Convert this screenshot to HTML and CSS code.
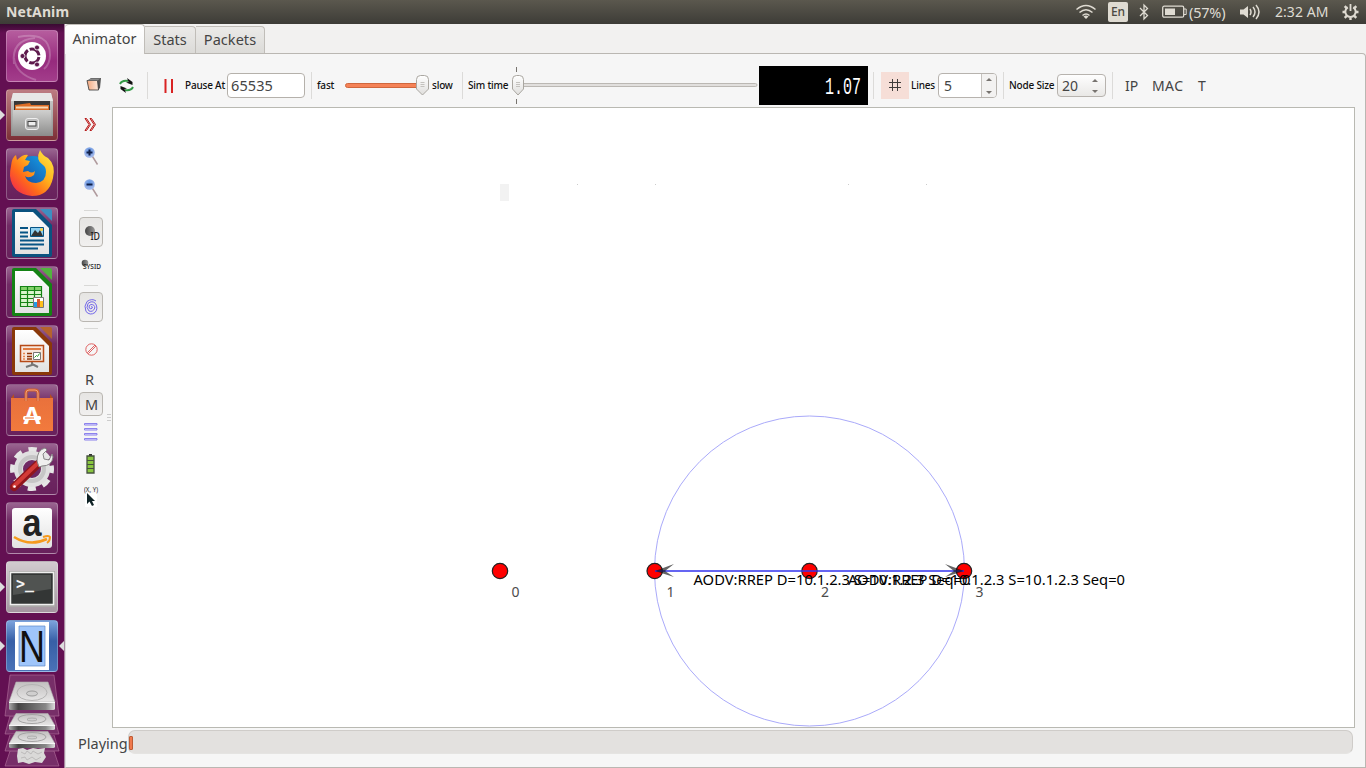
FILE: index.html
```html
<!DOCTYPE html>
<html lang="en">
<head>
<meta charset="utf-8">
<title>NetAnim</title>
<link rel="stylesheet" href="styles.css">
</head>
<body>
<svg class="defs" width="0" height="0">
  <defs>
    <linearGradient id="paper" x1="0" y1="0" x2="0" y2="1"><stop offset="0" stop-color="#fff"/><stop offset="1" stop-color="#e2e2e2"/></linearGradient>
    <linearGradient id="metal" x1="0" y1="0" x2="0" y2="1"><stop offset="0" stop-color="#d0d0cf"/><stop offset="1" stop-color="#8c8c8b"/></linearGradient>
    <linearGradient id="disk" x1="0" y1="0" x2="0" y2="1"><stop offset="0" stop-color="#c2c0c0"/><stop offset="1" stop-color="#e8e7e7"/></linearGradient>
    <linearGradient id="edge"><stop offset="0" stop-color="#aaa"/><stop offset=".2" stop-color="#444"/><stop offset=".8" stop-color="#888"/><stop offset="1" stop-color="#ddd"/></linearGradient>
    <linearGradient id="fire" x1="1" y1="0" x2="0" y2="1"><stop offset="0" stop-color="#fff04a"/><stop offset=".4" stop-color="#ffb01c"/><stop offset=".65" stop-color="#ff6a1a"/><stop offset="1" stop-color="#ee155b"/></linearGradient>
    <linearGradient id="globe" x1="0" y1="1" x2="1" y2="0"><stop offset="0" stop-color="#15398f"/><stop offset="1" stop-color="#16a6ee"/></linearGradient>
    <linearGradient id="bag" x1="0" y1="0" x2="0" y2="1"><stop offset="0" stop-color="#e9713c"/><stop offset="1" stop-color="#f27a3d"/></linearGradient>
    <linearGradient id="thumb" x1="0" y1="0" x2="0" y2="1"><stop offset="0" stop-color="#fff"/><stop offset="1" stop-color="#dfdedc"/></linearGradient>
    <radialGradient id="lens" cx=".5" cy=".35"><stop offset="0" stop-color="#5d92e0"/><stop offset="1" stop-color="#9bb4ea"/></radialGradient>
    <linearGradient id="ball"><stop offset="0" stop-color="#444"/><stop offset="1" stop-color="#999"/></linearGradient>
    <linearGradient id="peach"><stop offset="0" stop-color="#f3a980"/><stop offset="1" stop-color="#fde9dc"/></linearGradient>
    <g id="drive"><path d="M7 0h32l7 20H0z" fill="url(#disk)" stroke="#b0afaf" stroke-width=".6"/><ellipse cx="23" cy="10.500" rx="15" ry="8" fill="none" stroke="#b4b3b3"/><ellipse cx="23" cy="11.500" rx="5.500" ry="2.500" fill="#d0cfcf" stroke="#9b9b9b"/><path d="M0 20.500h46v6q0 1.500-2 1.500H2q-2 0-2-1.500z" fill="url(#edge)"/><path d="M0 20.500h46" stroke="#f7f7f7"/></g>
    <g id="drive-low"><path d="M7 0h32l7 12H0z" fill="url(#disk)" stroke="#b0afaf" stroke-width=".6"/><ellipse cx="23" cy="5.500" rx="14" ry="4.500" fill="none" stroke="#a4a3a3"/><ellipse cx="23" cy="6" rx="5" ry="1.500" fill="#d0cfcf" stroke="#9b9b9b" stroke-width=".7"/><path d="M0 12h46v3q0 1.500-2 1.500H2Q0 16.500 0 15z" fill="url(#edge)"/><path d="M0 12h46" stroke="#f7f7f7"/></g>
  </defs>
</svg>

<header class="menubar">
  <span class="app-name">NetAnim</span>
  <div class="indicators">
    <svg class="wifi" width="22" height="18" viewBox="0 0 22 18" fill="none" stroke="#dfdbd2"><path d="M1.500 6.500Q11-1.500 20.500 6.500M4.500 9.500Q11 4 17.500 9.500M7.500 12.500Q11 9.500 14.500 12.500" stroke-width="1.500"/><path d="M8.500 13.500Q11 11.500 13.500 13.500L11 16z" fill="#dfdbd2" stroke="none"/></svg>
    <span class="lang">En</span>
    <svg class="bluetooth" width="10" height="18" viewBox="0 0 10 18" fill="none" stroke="#dfdbd2" stroke-width="1.300"><path d="M1 5l7.500 7.500L5 16V2l3.500 3.500L1 13"/></svg>
    <svg class="power-cell" width="25" height="14" viewBox="0 0 25 14"><rect x=".7" y="1.200" width="21" height="11" rx="1.500" fill="none" stroke="#dfdbd2" stroke-width="1.300"/><path d="M3 3.500h10v6.500H3z" fill="#dfdbd2"/><path d="M22 4h2.200v5.500H22" fill="none" stroke="#dfdbd2"/></svg>
    <span class="charge">(57%)</span>
    <svg class="volume" width="20" height="18" viewBox="0 0 20 18"><path d="M0 6.500h3.500L8 3v12l-4.500-3.500H0z" fill="#dfdbd2"/><path d="M10 6q2 3 0 6M13 4q4 5 0 10M16 2q6 7 0 14" fill="none" stroke="#dfdbd2" stroke-width="1.500"/></svg>
    <span class="clock">2:32 AM</span>
    <svg class="gear" width="17" height="18" viewBox="0 0 17 18" fill="none" stroke="#dfdbd2"><path d="M5.800 4.300A5.200 5.200 0 1 0 11.200 4.300" stroke-width="2"/><path d="M8.500 1v7" stroke-width="1.800"/><path d="M.5 9H3M14 9h2.500M8.500 14.500V17M2.700 3.200l2 2M14.300 3.200l-2 2M2.700 14.800l2-2M14.300 14.800l-2-2" stroke-width="2.400"/></svg>
  </div>
</header>

<div class="desktop">
  <nav class="launcher">
    <div class="tile dash"><svg viewBox="0 0 52 52"><g fill="none" stroke="#fff" stroke-opacity=".22" stroke-width="2"><path d="M12 7Q44 1 44 25Q44 34 38 39M8 34Q5 10 29 8M8 28Q10 44 30 50"/></g><circle cx="26" cy="26" r="14" fill="#fff"/><circle cx="26" cy="26" r="7" fill="none" stroke="#5e1a4d" stroke-width="3" stroke-dasharray="12.700 2" stroke-dashoffset="-1"/><g fill="#5e1a4d" stroke="#fff" stroke-width=".8"><circle cx="16.500" cy="26" r="2.500"/><circle cx="31" cy="17.500" r="2.500"/><circle cx="31" cy="34.500" r="2.500"/></g></svg></div>
    <div class="tile files"><i class="run"></i><svg viewBox="0 0 52 52"><path d="M7 4h38l2 8v35H5V12z" fill="url(#metal)"/><path d="M7 4h38l2 8H5z" fill="#e7e7e6"/><path d="M8 12h36v13H8z" fill="#383838"/><path d="M9 16l15-2 1 2h18v8H9z" fill="#dd6d25"/><path d="M10 17.500h32v2H10z" fill="#f7d9b5"/><path d="M7 21h38l1 26H6z" fill="url(#metal)"/><rect x="19.500" y="29.500" width="13" height="11" rx="2.500" fill="#bbb" stroke="#eee"/><rect x="22" y="32.500" width="8" height="4.500" fill="#eee" stroke="#444"/></svg></div>
    <div class="tile plain"><svg viewBox="0 0 52 52"><circle cx="27" cy="25" r="17" fill="url(#globe)"/><path d="M5 18q1-9 5-11l1 5q6-6 11-5l-3 5 5 1-2 4-4 2-1 5 5-1q4 3 7 0l-1 4q-5 4-9 1 2 7 11 7 10-1 10-11 0-5-3-7-8-5-3-15 2 5 8 8 8 7 5 20Q43 48 26 48 6 46 4 28q0-6 1-10z" fill="url(#fire)"/></svg></div>
    <div class="tile plain"><svg viewBox="0 0 52 52"><path d="M8 2h22l16 16v30q0 2-2 2H8q-2 0-2-2V4q0-2 2-2z" fill="#0b527f"/><path d="M34 2h10q2 0 2 2v10z" fill="#3d8fc1"/><path d="M9 5h18l16 16v26H9z" fill="url(#paper)"/><path d="M14 21h8M14 25.500h8M14 29.500h8M14 33.500h24M14 37.500h24M14 41.500h18" stroke="#075485" stroke-width="2"/><path d="M24.500 20.500h13v9h-13z" fill="#8fd0ef" stroke="#075485"/><path d="M25 29l4-6 3 3 2-3 3 6z" fill="#333"/><circle cx="35.500" cy="22.500" r="1.500" fill="#ffd23d"/></svg></div>
    <div class="tile plain"><svg viewBox="0 0 52 52"><path d="M8 2h22l16 16v30q0 2-2 2H8q-2 0-2-2V4q0-2 2-2z" fill="#148214"/><path d="M34 2h10q2 0 2 2v10z" fill="#52b33f"/><path d="M9 5h18l16 16v26H9z" fill="url(#paper)"/><path d="M15 21h20v19H15z" fill="#d9f4cd"/><path d="M15 21h20v3H15z" fill="#83d269"/><path d="M14.500 20.500h21v20h-21zM14.500 24.500h21M14.500 28.500h21M14.500 32.500h21M14.500 36.500h21M21.500 20.500v20M28.500 20.500v20" fill="none" stroke="#158315" stroke-width="1.200"/><path d="M27.500 31.500h10v10h-10z" fill="#fff" stroke="#777"/><path d="M28 36h3v5h-3z" fill="#249be6"/><path d="M31 33h3v8h-3z" fill="#d8562d"/><path d="M34 35h3v6h-3z" fill="#ffc01c"/></svg></div>
    <div class="tile plain"><svg viewBox="0 0 52 52"><path d="M8 2h22l16 16v30q0 2-2 2H8q-2 0-2-2V4q0-2 2-2z" fill="#8a3809"/><path d="M34 2h10q2 0 2 2v10z" fill="#b5632d"/><path d="M9 5h18l16 16v26H9z" fill="url(#paper)"/><path d="M26 37v3l-6 2M26 39l6 3" fill="none" stroke="#777" stroke-width="2"/><path d="M14.500 20.500h23v16h-23z" fill="#f7e7dc" stroke="#b64a17" stroke-width="1.500"/><path d="M17 24h18" stroke="#e07b42" stroke-width="2"/><path d="M21 28.500h5M21 31.500h5M21 34h5" stroke="#913709" stroke-width="1.500"/><path d="M17 28.500h2M17 31.500h2M17 34h2" stroke="#e6864d" stroke-width="1.500"/><path d="M27.500 27.500h7v7h-7z" fill="#fff" stroke="#777"/><path d="M28.500 32.500l2-2 1 1 2-3" fill="none" stroke="#2b9e2b"/></svg></div>
    <div class="tile plain"><svg viewBox="0 0 52 52"><path d="M5 14l3-4v4M47 14l-3-4v4" fill="#b64e1e"/><path d="M5 14h42v33H5z" fill="url(#bag)"/><path d="M20 17V9q0-3 3-3h6q3 0 3 3v8" fill="none" stroke="#d0602f" stroke-width="3"/><path d="M20 17V9q0-3 3-3h6q3 0 3 3v8" fill="none" stroke="#f1a17d" stroke-width="1"/><text x="26" y="40" text-anchor="middle" textLength="17" lengthAdjust="spacingAndGlyphs" class="bag-letter">A</text><rect x="17" y="32" width="18" height="4" rx="1.500" fill="#fff"/><path d="M19 34h9" stroke="#ef7439"/></svg></div>
    <div class="tile plain"><svg viewBox="0 0 52 52"><circle cx="26" cy="26" r="19" fill="none" stroke="#e6e6e6" stroke-width="6" stroke-dasharray="8 6.920" stroke-dashoffset="4"/><circle cx="26" cy="26" r="13.500" fill="none" stroke="#e0e0e0" stroke-width="9"/><circle cx="26" cy="26" r="12" fill="none" stroke="#c6c6c6" stroke-width="4"/><path d="M8 44L32 21" stroke="#90151b" stroke-width="8" stroke-linecap="round"/><path d="M8 43L32 20" stroke="#d23b37" stroke-width="4" stroke-linecap="round"/><path d="M31 18q0-11 8-13l2 2-4 4 1 5 5 1 3-6 1 3q-1 9-11 9l-3 1z" fill="#f0f0ef" stroke="#888"/><circle cx="8.500" cy="43.500" r="1.300" fill="#fff"/></svg></div>
    <div class="tile plain"><svg viewBox="0 0 52 52"><rect x="6" y="6" width="40" height="40" rx="3" fill="url(#paper)"/><text x="26" y="33.500" text-anchor="middle" textLength="19" lengthAdjust="spacingAndGlyphs" class="shop-letter">a</text><path d="M8 35q16 10 33 2" fill="none" stroke="#f59a1d" stroke-width="2.500"/><path d="M37 35q6-2 7 0 0 4-3 6" fill="none" stroke="#f59a1d" stroke-width="2"/></svg></div>
    <div class="tile terminal"><i class="run"></i><svg viewBox="0 0 52 52"><path d="M3 10h46v36H3z" fill="#aaa8a7"/><path d="M4.500 11.500h43v32h-43z" fill="#333635" stroke="#efefee" stroke-width="1.500"/><path d="M7 14h38v14L7 34z" fill="#505351"/><text x="10" y="28" class="prompt">&gt;_</text></svg></div>
    <div class="tile netanim"><i class="run"></i><i class="focus"></i><svg viewBox="0 0 52 52"><path d="M9 2h34v48H9z" fill="#fff"/><path d="M13 6h26v40H13z" fill="#9fc5fa" stroke="#5b86c6" stroke-width=".7"/><text x="26" y="42" text-anchor="middle" textLength="26" lengthAdjust="spacingAndGlyphs" class="net-letter">N</text></svg></div>
    <svg class="drives" viewBox="0 0 65 94" width="65" height="94"><g fill="#fff" fill-opacity=".13" stroke="#b6719f" stroke-opacity=".6"><path d="M10 1h44l5 41H5z"/><path d="M10 42l-5 18h54l-5-18"/><path d="M10 61l-5 16h54l-5-16"/><path d="M10 77l-5 15h54l-5-15"/></g><use href="#drive" x="9" y="8"/><use href="#drive-low" x="9" y="39.500"/><use href="#drive-low" x="9" y="57.500"/><path d="M18 75l5-1 4 2 6-2 5 1 7-1-1 5 2 4-4 6-7-1-6 2-6-2-5 1-1-7z" fill="#dad9d8"/><path d="M21 78l4 2 2-3 4 3 2-3 5 3 4-2M21 84l4-1 2 3 5-3 4 3 5-3" fill="none" stroke="#b5b3b3" stroke-width=".8"/></svg>
  </nav>

  <main class="window">
    <div class="tabs"><span class="tab active">Animator</span><span class="tab stats">Stats</span><span class="tab packets">Packets</span></div>
    <section class="panel">
      <div class="toolbar">
        <svg class="open" width="16" height="16" viewBox="0 0 16 16"><path d="M1 3l4-3h10l-1 10-2 2z" fill="#555"/><path d="M1 2.500h10.500l1 9.500H3z" fill="url(#peach)" stroke="#333" stroke-width=".8"/><path d="M1 2.500L5 .5h9.500l-3 2z" fill="#888"/></svg>
        <svg class="reload" width="17" height="17" viewBox="0 0 17 17"><path d="M2 7Q4 3 10 4" fill="none" stroke="#329944" stroke-width="2"/><path d="M9 1l5.500 4v3L8 5.500l2.500-.5z" fill="#111"/><path d="M15 10q-2 4-8 3" fill="none" stroke="#329944" stroke-width="2"/><path d="M8 16l-5.500-4V9L9 11.500l-2.500.5z" fill="#111"/></svg>
        <i class="sep s1"></i>
        <svg class="pause" width="10" height="14" viewBox="0 0 10 14"><path d="M1.500 0v14M8 0v14" stroke="#d92323" stroke-width="2"/></svg>
        <label class="small pause-label">Pause At</label>
        <span class="field">65535</span>
        <i class="sep s2"></i>
        <label class="small fast">fast</label>
        <svg class="speed" width="84" height="22" viewBox="0 0 84 22"><rect x=".5" y="8.500" width="76" height="4" rx="2" fill="#f58257" stroke="#cf673e"/><path d="M75.500 .5h4q4 0 4 4V14l-6 6-6-6V4.500q0-4 4-4z" fill="url(#thumb)" stroke="#aaa7a1"/><path d="M75.500 7.500h4M75.500 9.500h4M75.500 11.500h4" stroke="#c4c2be"/></svg>
        <label class="small slow">slow</label>
        <i class="sep s3"></i>
        <label class="small sim">Sim time</label>
        <svg class="timeline" width="246" height="38" viewBox="0 0 246 38"><path d="M4.500 0v5M4.500 32v5" stroke="#77736e"/><rect x="8" y="16.500" width="237" height="3" rx="1.500" fill="#e1dfdd" stroke="#bbb8b3"/><path d="M4.500 8.500h3q4 0 4 4V22L6 28 .5 22v-9.500q0-4 4-4z" fill="url(#thumb)" stroke="#aaa7a1"/><path d="M4 15.500h4M4 17.500h4M4 19.500h4" stroke="#c4c2be"/></svg>
        <svg class="lcd" width="109" height="39" viewBox="0 0 109 39"><text x="66" y="27.500" textLength="36" lengthAdjust="spacingAndGlyphs">1.07</text></svg>
        <i class="sep s4"></i>
        <span class="grid-toggle"><svg width="12" height="12" viewBox="0 0 12 12"><path d="M3.500 0v12M8.500 0v12M0 3.500h12M0 8.500h12" stroke="#403c3a"/></svg></span>
        <label class="small lines">Lines</label>
        <span class="spin lines-spin"><b>5</b><i class="arrows"></i></span>
        <i class="sep s5"></i>
        <label class="small node">Node Size</label>
        <span class="spin node-spin"><b>20</b><i class="arrows"></i></span>
        <i class="sep s6"></i>
        <span class="flag ip">IP</span><span class="flag mac">MAC</span><span class="flag tee">T</span>
      </div>
      <div class="workspace">
        <aside class="tools">
          <svg class="step" width="13" height="15" viewBox="0 0 13 15" fill="none" stroke="#b51a1a" stroke-width="1"><path d="M1 1.500h1.500l4 6-4 6H1l4-6zM6 1.500h1.500l4 6-4 6H6l4-6z" fill="#fbc4c4"/></svg>
          <svg class="zoom-in" width="16" height="20" viewBox="0 0 16 20"><path d="M8.500 9.500l5 8" stroke="#b09a9d" stroke-width="1.500"/><circle cx="5.500" cy="5.500" r="5.300" fill="url(#lens)"/><path d="M5.500 2.500v6M2.500 5.500h6" stroke="#101f48" stroke-width="2"/></svg>
          <svg class="zoom-out" width="16" height="20" viewBox="0 0 16 20"><path d="M8.500 9.500l5 8" stroke="#b09a9d" stroke-width="1.500"/><circle cx="5.500" cy="5.500" r="5.300" fill="url(#lens)"/><path d="M2.500 5.500h6" stroke="#101f48" stroke-width="2"/></svg>
          <i class="rule r1"></i>
          <span class="tool-btn id-btn"><svg width="22" height="28" viewBox="0 0 22 28"><circle cx="10" cy="13" r="5" fill="url(#ball)"/><text x="10.500" y="21.500" textLength="9.500" lengthAdjust="spacingAndGlyphs" class="id-text">ID</text></svg></span>
          <svg class="sysid" width="22" height="12" viewBox="0 0 22 12"><circle cx="4" cy="4" r="3.300" fill="url(#ball)"/><text x="2" y="10" textLength="18" lengthAdjust="spacingAndGlyphs" class="sys-text">SYSID</text></svg>
          <i class="rule r2"></i>
          <span class="tool-btn wave-btn"><svg width="14" height="16" viewBox="0 0 14 16" fill="none" stroke="#7266ea"><path d="M7 8q1.500-1 1.500.8Q7 11 5.200 9q-1-3 1.800-3.500Q11 5.500 10.800 9 9 13.500 5 12 1.500 8.500 4 4.500 8 1 11.500 4.500q3 5-.5 9Q6 17 2 12.500-.5 7 3 2.500 8-1 12 2"/></svg></span>
          <i class="rule r3"></i>
          <svg class="block" width="13" height="13" viewBox="0 0 13 13" fill="none" stroke="#df6262"><circle cx="6.500" cy="6.500" r="5.700"/><path d="M10 2L2.500 9.500l1 1L11 3z"/></svg>
          <span class="letter r-btn">R</span>
          <span class="tool-btn m-btn">M</span>
          <svg class="table" width="14" height="19" viewBox="0 0 14 19" fill="#eceaff" stroke="#8075ea" stroke-width=".9"><path d="M.5 1.500h12.500v1.500H.5zM.5 6.500h12.500v1.500H.5zM.5 11.500h12.500v1.500H.5zM.5 16.500h12.500v1.500H.5z"/></svg>
          <svg class="battery" width="9" height="20" viewBox="0 0 9 20"><path d="M3 0h3v2H3z" fill="#333"/><path d="M1 2h7v17H1z" fill="#89c63f" stroke="#46513f" stroke-width="1.300"/><path d="M1 6.500h7M1 10.500h7M1 14.500h7" stroke="#46513f"/></svg>
          <svg class="xy" width="17" height="22" viewBox="0 0 17 22"><path d="M1 8h12v14H1z" fill="#fff"/><text x="0" y="7" textLength="14" lengthAdjust="spacingAndGlyphs" class="xy-text">(X, Y)</text><path d="M3 8v11l2.500-2.500L8 21l2-1-2-4h3z" fill="#102326"/></svg>
        </aside>
        <svg class="scene" width="1241" height="619" viewBox="113 108 1241 619">
          <path d="M500 184h9v17h-9z" fill="#f2f2f2"/>
          <path d="M577 184.500h1M655 184.500h1M848 184.500h1M926 184.500h1" stroke="#ccc"/>
          <circle cx="809.500" cy="571" r="155" fill="none" stroke="#aaaafa"/>
          <g fill="#f00" stroke="#222" stroke-width="1.200"><circle cx="500" cy="571" r="7.700"/><circle cx="654.700" cy="571" r="7.700"/><circle cx="809.500" cy="571" r="7.700"/><circle cx="964" cy="571" r="7.700"/></g>
          <path d="M655 571h309" stroke="#3232ee" stroke-width="1.300"/>
          <g fill="#111" fill-opacity=".65"><path d="M655 571l19-7-9 7 9 6z"/><path d="M964 571l-19-7 9 7-9 6z"/></g>
          <g class="packet"><text x="693.500" y="585" textLength="277" lengthAdjust="spacingAndGlyphs">AODV:RREP D=10.1.2.3 S=10.1.2.3 Seq=0</text><text x="848" y="585" textLength="277" lengthAdjust="spacingAndGlyphs">AODV:RREP D=10.1.2.3 S=10.1.2.3 Seq=0</text></g>
          <g class="node-id"><text x="511.500" y="597">0</text><text x="666.500" y="597">1</text><text x="821" y="597">2</text><text x="975.500" y="597">3</text></g>
        </svg>
      </div>
      <footer class="status"><span>Playing</span><div class="progress"><i></i></div></footer>
    </section>
  </main>
</div>
</body>
</html>
```
FILE: styles.css
```css
* { box-sizing: border-box; }
body { margin: 0; width: 1366px; height: 768px; overflow: hidden; background: #f2f1f0; font: 14px "Noto Sans", "Open Sans", sans-serif; color: #444; }
svg { display: block; flex: none; }
text { font-family: "Noto Sans", sans-serif; }
.defs { position: absolute; }

.menubar { height: 24px; display: flex; justify-content: space-between; align-items: center; padding: 0 7px 0 6px; background: linear-gradient(#5b584e, #3d3c37); color: #dfdbd2; line-height: 24px; }
.app-name { font-weight: 700; font-size: 14px; letter-spacing: .1px; }
.indicators { display: flex; align-items: center; white-space: nowrap; }
.lang { width: 20px; height: 20px; margin-left: 11px; border-radius: 2px; background: #dfdbd2; color: #4b4943; text-align: center; line-height: 20px; font-size: 12px; font-weight: 500; }
.bluetooth { margin-left: 11px; }
.power-cell { margin-left: 13px; }
.charge { width: 38px; margin-left: 2px; font-size: 14.500px; letter-spacing: -.2px; }
.volume { margin-left: 13px; }
.clock { width: 54px; margin-left: 15px; letter-spacing: .05px; }
.gear { margin-left: 13px; }

.desktop { display: flex; height: 744px; }
.launcher { width: 65px; flex: none; height: 744px; padding-top: 6px; background: linear-gradient(#390a32, #631052 9px, #631052); border-right: 1px solid #a986a0; display: flex; flex-direction: column; gap: 7px; }
.tile { position: relative; flex: none; width: 52px; height: 52px; margin-left: 6px; border-radius: 4px; border: 1px solid rgba(255,255,255,.25); background: linear-gradient(#9a6591, #712b65 35%, #68215c); }
.tile svg { width: 52px; height: 52px; margin: -1px; }
.dash { background: linear-gradient(#b65d9e, #962a7d 60%, #a33d8b); }
.files { background: linear-gradient(#bd7c82, #7c2f36); }
.terminal { background: linear-gradient(#d2cbcf, #a495a0); }
.netanim { background: linear-gradient(#7ca2dc, #375fa6 40%, #4a72b7); }
.run, .focus { position: absolute; top: 20px; border: 5px solid transparent; }
.run { left: -7px; border-left-color: #ddd; border-right: 0; }
.focus { right: -7px; border-right-color: #ddd; border-left: 0; }
.drives { margin-top: -5px; }
.bag-letter { font: 700 24px "Noto Sans", sans-serif; fill: #fff; }
.shop-letter { font: 700 38px "Liberation Sans", sans-serif; fill: #222; }
.prompt { font: 700 15px "DejaVu Sans Mono", monospace; fill: #f4f4f4; }
.net-letter { font: 45px "Liberation Sans", sans-serif; fill: #101010; }

.window { width: 1301px; display: flex; flex-direction: column; }
.tabs { height: 30px; display: flex; align-items: flex-end; flex: none; z-index: 1; }
.tab { height: 27px; margin-bottom: 1px; border: 1px solid #c0bdb8; border-left: 0; border-bottom: 0; background: linear-gradient(#ebeae8, #dcdbd8); border-radius: 0 4px 0 0; text-align: center; line-height: 25px; white-space: nowrap; }
.tab.active { width: 80px; height: 30px; margin-bottom: 0; padding-bottom: 2px; border-radius: 4px 4px 0 0; background: linear-gradient(#fff, #f6f6f6); line-height: 27px; font-size: 14.500px; letter-spacing: .05px; }
.stats { width: 51px; font-size: 14.500px; }
.packets { width: 69px; font-size: 14.500px; letter-spacing: .05px; }
.panel { height: 715px; margin-top: -1px; width: 1301px; border: 1px solid #bab7b2; border-left-color: #ddd; border-radius: 0 4px 0 0; background: #f6f6f6; display: flex; flex-direction: column; }

.toolbar { height: 53px; flex: none; padding: 10px 0 0 20px; display: flex; align-items: center; white-space: nowrap; }
.toolbar > * { flex: none; }
.sep { width: 1px; height: 27px; background: #dcdbd9; }
.small { font-size: 10px; font-weight: 500; color: #111; letter-spacing: -.2px; line-height: 18px; margin-bottom: 1px; }
.reload { margin-left: 16px; }
.s1 { margin-left: 12px; }
.pause { margin-left: 16px; }
.pause-label { width: 42px; margin-left: 11px; }
.field { width: 78px; height: 25px; border: 1px solid #b5b1ab; border-radius: 4px; background: #fff; padding-left: 3px; line-height: 23px; font-size: 14.500px; letter-spacing: .1px; }
.s2 { margin-left: 6px; }
.fast { width: 28px; margin-left: 5px; }
.slow { width: 30px; margin-left: 3px; }
.sim { width: 44px; margin-left: 5px; }
.lcd { margin-left: 1px; background: #000; }
.lcd text { font: 23px "Liberation Mono", monospace; fill: #fff; }
.s4 { margin-left: 5px; }
.grid-toggle { width: 28px; height: 27px; margin: 0 0 1px 7px; background: #f6ded7; display: flex; align-items: center; justify-content: center; }
.lines { width: 27px; margin-left: 2px; }
.spin { display: flex; border: 1px solid #b7b3ae; border-radius: 4px; font-size: 14px; }
.spin b { font-weight: 400; flex: 1; }
.arrows { position: relative; width: 15px; }
.arrows::before, .arrows::after { content: ""; position: absolute; left: 4px; border: 3px solid transparent; }
.arrows::before { top: 4px; border-bottom-color: #77736f; border-top: 0; }
.arrows::after { bottom: 3px; border-top-color: #77736f; border-bottom: 0; }
.lines-spin { width: 59px; height: 25px; background: #fff; line-height: 23px; padding-left: 5px; }
.lines-spin .arrows { border-left: 1px solid #c5c2be; background: #f3f2f1; border-radius: 0 3px 3px 0; }
.s5 { margin-left: 6px; }
.node { width: 48px; margin-left: 5px; }
.node-spin { width: 49px; height: 23px; background: linear-gradient(#fefefe, #e9e8e6); line-height: 21px; padding-left: 4px; }
.node-spin .arrows { width: 17px; }
.s6 { margin-left: 6px; }
.ip { width: 27px; margin-left: 12px; }
.mac { width: 46px; letter-spacing: .4px; }

.workspace { height: 621px; flex: none; display: flex; }
.tools { position: relative; width: 46px; padding-left: 13px; display: flex; flex-direction: column; align-items: flex-start; }
.tools > * { flex: none; }
.tools::after { content: ""; position: absolute; left: 41px; top: 307px; width: 4px; height: 7px; background: repeating-linear-gradient(#ccc 0 1px, transparent 1px 3px); }
.scene { width: 1243px; height: 621px; border: 1px solid #b9b9b2; background: #fff; }
.step { margin: 10px 0 0 5px; }
.zoom-in { margin: 15px 0 0 5px; }
.zoom-out { margin: 12px 0 0 5px; }
.rule { width: 14px; height: 1px; margin-left: 5px; background: #d8d8d6; }
.r1 { margin-top: 11px; }
.tool-btn { width: 24px; border: 1px solid #b9b6b1; border-radius: 4px; background: linear-gradient(#e6e5e3, #f1f0ef); display: flex; align-items: center; justify-content: center; }
.id-btn { height: 30px; margin-top: 6px; }
.id-text { font-size: 11px; font-weight: 500; fill: #222; }
.sysid { margin: 12px 0 0 2px; }
.sys-text { font-size: 7.500px; font-weight: 500; fill: #222; }
.r2 { margin-top: 14px; }
.wave-btn { height: 30px; margin-top: 6px; }
.r3 { margin-top: 6px; }
.block { margin: 14px 0 0 6px; }
.letter { margin-left: 6px; line-height: 20px; }
.r-btn { margin-top: 13px; font-size: 14.500px; }
.m-btn { height: 24px; margin-top: 3px; padding-left: 1px; font-size: 14.500px; }
.table { margin: 6px 0 0 5px; }
.battery { margin: 13px 0 0 7px; }
.xy { margin: 11px 0 0 5px; }
.xy-text { font-size: 7px; fill: #222; }
.packet { font-size: 14px; fill: #000; }
.node-id { font-size: 14px; fill: #4c4c4c; }

.status { display: flex; padding: 2px 12px 0 12px; line-height: 26px; }
.status span { width: 50px; white-space: nowrap; font-size: 14.500px; }
.progress { flex: 1; height: 24px; padding: 5px 0 0 0; border: 1px solid #cfccc9; border-bottom-color: #e5e4e2; border-radius: 7px; background: #e3e1df; }
.progress i { display: block; width: 4px; height: 14px; border: 1px solid #bd5c35; border-radius: 1px; background: #f0794d; }
```
